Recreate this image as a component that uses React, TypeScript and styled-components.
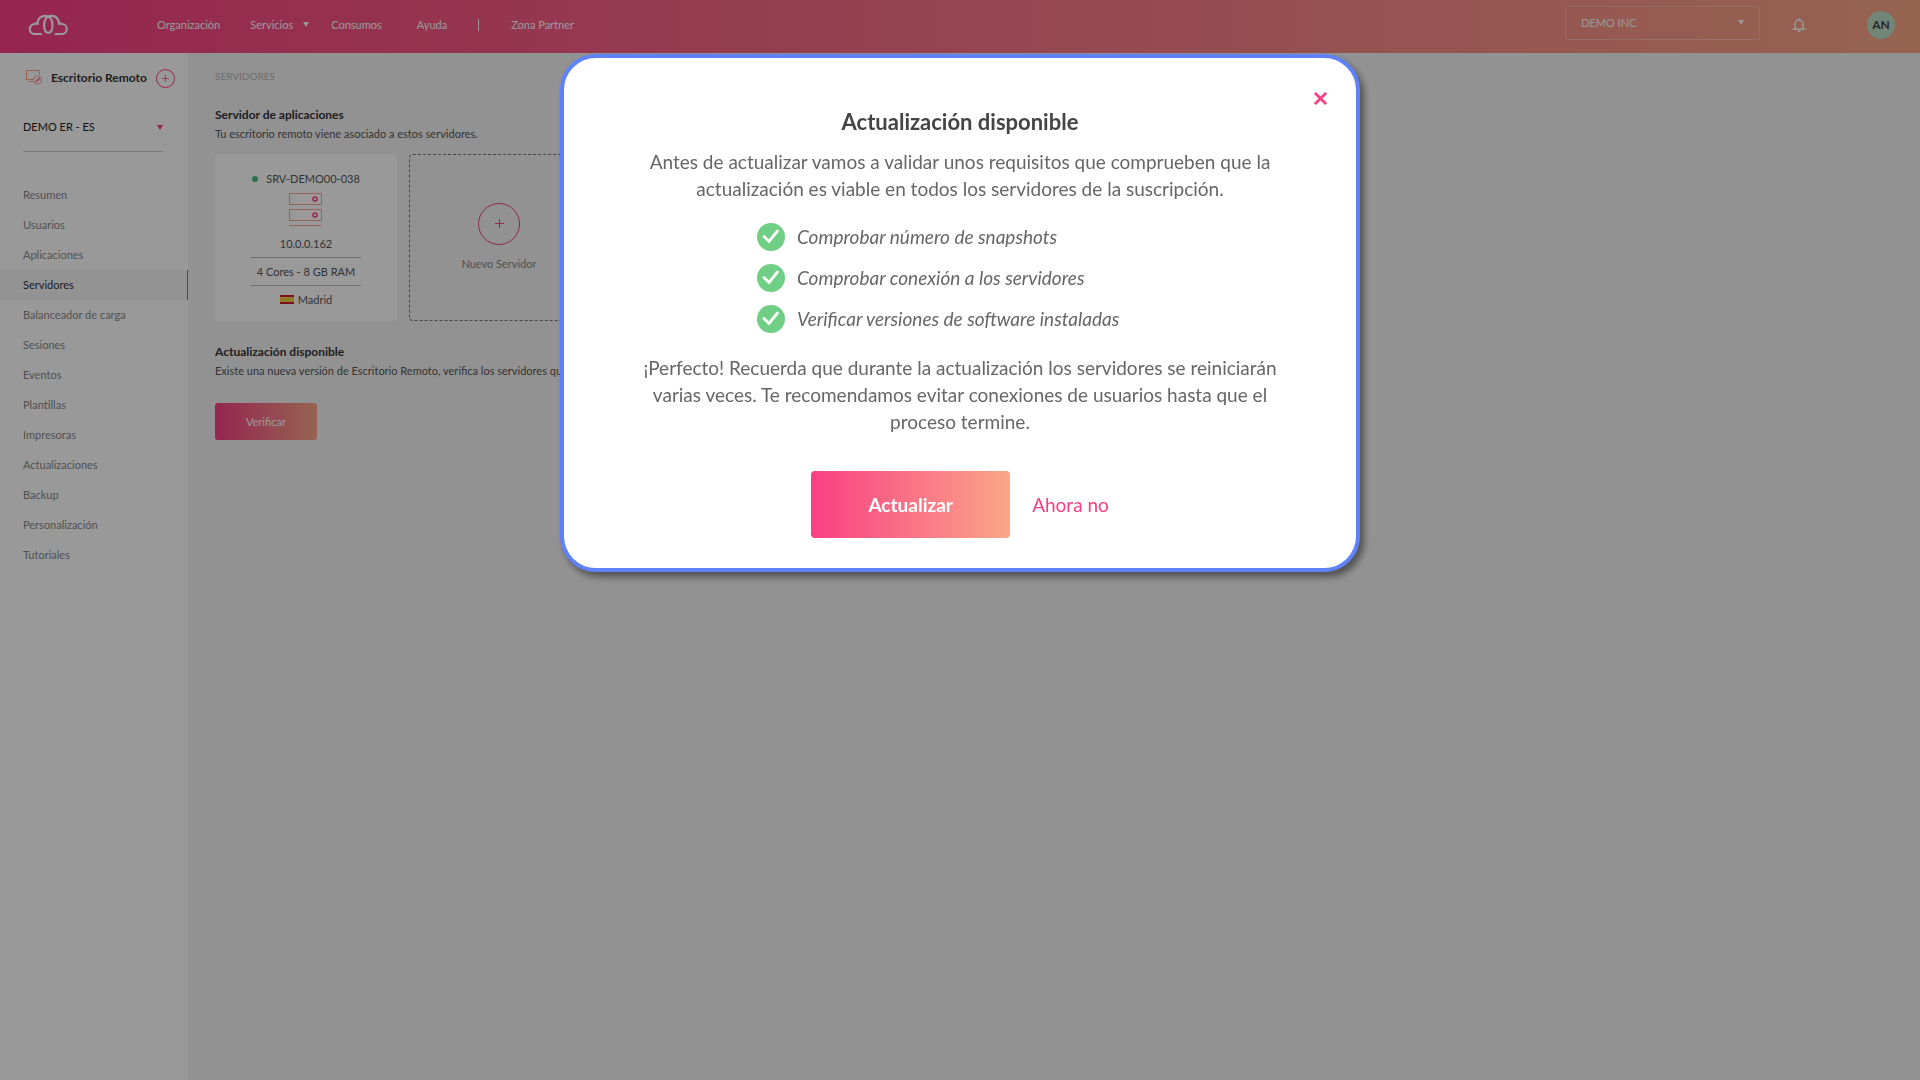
import React from 'react';
import styled, { createGlobalStyle } from 'styled-components';

const pink = '#f93f84';
const peach = '#faa688';
const brand = `linear-gradient(90deg, ${pink} 0%, ${peach} 100%)`;

const GlobalStyle = createGlobalStyle`
  * { box-sizing: border-box; }
  body { margin: 0; background: #f3f3f3; font-family: Lato, "Liberation Sans", sans-serif; font-size: 11px; line-height: 18px; color: #555; }
  button, select { font: inherit; color: inherit; background: none; border: 0; padding: 0; margin: 0; cursor: pointer; }
  a { color: inherit; text-decoration: none; }
  h1, h2, p, ul { margin: 0; padding: 0; list-style: none; }
  svg { flex-shrink: 0; }
`;

const Page = styled.div`
  min-height: 100vh;
  display: flex;
  flex-direction: column;
`;

const Header = styled.header`
  height: 53px;
  padding: 0 25px 4px 28px;
  display: flex;
  align-items: center;
  background: ${brand};
  color: #fff;
`;

const Logo = styled.a`
  display: flex;
  width: 129px;
`;

const TopNav = styled.nav`
  display: flex;
  flex: 1;
  align-items: center;
`;

const TopLink = styled.a<{ $gap: number }>`
  display: flex;
  align-items: center;
  gap: 10px;
  margin-right: ${(p) => p.$gap}px;
`;

const Triangle = styled.span<{ $color: string }>`
  border: 3px solid transparent;
  border-top: 5px solid ${(p) => p.$color};
  border-bottom: 0;
  pointer-events: none;
`;

const Divider = styled.span`
  width: 1px;
  height: 12px;
  margin-right: 32px;
  background: #fff;
`;

const CompanyBox = styled.div`
  width: 195px;
  height: 34px;
  margin-top: -4px;
  padding: 0 15px;
  display: flex;
  align-items: center;
  border: 1px solid rgba(255, 255, 255, 0.3);
  border-radius: 3px;
`;

const BareSelect = styled.select`
  flex: 1;
  appearance: none;
  outline: 0;
  option { color: #333; }
`;

const Bell = styled.button`
  margin: 0 61px 0 32px;
  display: flex;
`;

const Avatar = styled.button`
  width: 28px;
  height: 28px;
  border-radius: 50%;
  background: #bfe0c8;
  color: #444;
  font-size: 12px;
  font-weight: 700;
  line-height: 28px;
`;

const Body = styled.div`
  flex: 1;
  display: flex;
`;

const Sidebar = styled.aside`
  width: 188px;
  background: #fff;
`;

const Product = styled.div`
  height: 50px;
  padding: 0 13px 0 25px;
  display: flex;
  align-items: center;
  font-weight: 700;
  font-size: 12px;
  color: #333;
  white-space: nowrap;
`;

const ProductName = styled.span`
  flex: 1;
  margin-left: 8px;
`;

const RoundButton = styled.button<{ $size: number }>`
  width: ${(p) => p.$size}px;
  height: ${(p) => p.$size}px;
  display: flex;
  align-items: center;
  justify-content: center;
  border: 1px solid ${pink};
  border-radius: 50%;
`;

const Subscription = styled.div`
  height: 49px;
  margin: 0 25px 0 23px;
  display: flex;
  align-items: center;
  border-bottom: 1px solid #ccc;
  color: #222;
`;

const Menu = styled.ul`
  padding-top: 28px;
`;

const MenuLink = styled.a<{ $active?: boolean }>`
  height: 30px;
  padding-left: 23px;
  display: flex;
  align-items: center;
  border-right: 1px solid ${(p) => (p.$active ? pink : 'transparent')};
  background: ${(p) => (p.$active ? '#f6f6f6' : 'transparent')};
  color: ${(p) => (p.$active ? '#333' : '#888')};
`;

const Main = styled.main`
  flex: 1;
  padding: 15px 27px;
`;

const Crumb = styled.p`
  font-size: 10px;
  line-height: 16px;
  color: #b5b5b5;
  margin-bottom: 21px;
`;

const SectionTitle = styled.h2`
  font-size: 12px;
  line-height: 19px;
  font-weight: 700;
  color: #333;
`;

const SectionText = styled.p`
  line-height: 20px;
`;

const Cards = styled.div`
  display: flex;
  gap: 12px;
  margin: 10px 0 21px;
`;

const ServerCard = styled.article`
  width: 182px;
  height: 167px;
  padding: 16px 36px 0;
  display: flex;
  flex-direction: column;
  align-items: center;
  border-radius: 4px;
  background: #fff;
`;

const ServerName = styled.div`
  display: flex;
  align-items: center;
  gap: 8px;
  white-space: nowrap;
`;

const Dot = styled.span`
  width: 6px;
  height: 6px;
  border-radius: 50%;
  background: #43bd84;
`;

const ServerRow = styled.div<{ $line?: boolean }>`
  width: 100%;
  height: 28px;
  display: flex;
  align-items: center;
  justify-content: center;
  gap: 4px;
  border-bottom: 1px solid ${(p) => (p.$line ? '#bbb' : 'transparent')};
  white-space: nowrap;
`;

const Flag = styled.span`
  width: 14px;
  height: 9px;
  background: linear-gradient(#c8202a 25%, #f6cf45 25%, #f6cf45 75%, #c8202a 75%);
`;

const NewCard = styled.div`
  width: 180px;
  height: 167px;
  display: flex;
  flex-direction: column;
  align-items: center;
  justify-content: center;
  gap: 10px;
  border: 1px dashed #777;
  border-radius: 4px;
  color: #888;
`;

const VerifyButton = styled.button`
  width: 102px;
  height: 37px;
  margin-top: 22px;
  border-radius: 3px;
  background: ${brand};
  color: #fff;
`;

const Overlay = styled.div`
  position: fixed;
  inset: 0;
  padding-top: 54px;
  display: flex;
  align-items: flex-start;
  justify-content: center;
  background: rgba(0, 0, 0, 0.4);
`;

const Dialog = styled.section`
  position: relative;
  width: 800px;
  padding: 48px 60px 30px;
  display: flex;
  flex-direction: column;
  align-items: center;
  border: 4px solid #5f82fb;
  border-radius: 36px;
  background: #fff;
  box-shadow: 4px 5px 7px rgba(0, 0, 0, 0.45);
  font-size: 19px;
  line-height: 27px;
  text-align: center;
  color: #666;
`;

const CloseButton = styled.button`
  position: absolute;
  top: 34px;
  right: 29px;
  display: flex;
`;

const DialogTitle = styled.h1`
  font-size: 22px;
  line-height: 32px;
  font-weight: 700;
  color: #444;
  margin-bottom: 10px;
`;

const Checks = styled.ul`
  width: 406px;
  margin: 14px 0 15px;
  text-align: left;
`;

const Check = styled.li`
  height: 41px;
  display: flex;
  align-items: center;
  gap: 12px;
  font-style: italic;
  white-space: nowrap;
`;

const Actions = styled.div`
  margin-top: 36px;
  display: flex;
  align-items: center;
  gap: 22px;
`;

const UpdateButton = styled.button`
  width: 199px;
  height: 67px;
  border-radius: 4px;
  background: ${brand};
  color: #fff;
  font-weight: 700;
`;

const LaterButton = styled.button`
  color: ${pink};
`;

const Plus = ({ size }: { size: number }) => (
  <svg width={size} height={size} viewBox="0 0 9 9" fill="none" stroke={pink}>
    <path d="M4.5 0v9M0 4.5h9" />
  </svg>
);

const CheckIcon = () => (
  <svg width="28" height="28" viewBox="0 0 28 28" fill="none">
    <circle cx="14" cy="14" r="14" fill="#6fcf84" />
    <path d="M7 13.5l5 5L20.500 8" stroke="#fff" strokeWidth="2.8" strokeLinecap="round" />
  </svg>
);

const menu = ['Resumen', 'Usuarios', 'Aplicaciones', 'Servidores', 'Balanceador de carga', 'Sesiones', 'Eventos', 'Plantillas', 'Impresoras', 'Actualizaciones', 'Backup', 'Personalización', 'Tutoriales'];
const checks = ['Comprobar número de snapshots', 'Comprobar conexión a los servidores', 'Verificar versiones de software instaladas'];

export default function App() {
  return (
    <>
      <GlobalStyle />
      <Page>
        <Header>
          <Logo href="#" aria-label="Inicio">
            <svg width="40" height="22" viewBox="0 0 40 22" fill="none" stroke="#fff" strokeWidth="2.2" strokeLinecap="round">
              <path d="M13 20H7a5 5 0 0 1-.5-10C7.500 9.300 8.500 9.300 9.500 9.800 9.500 5 12.500 1.800 17 1.800c5 0 7.500 4 7.500 9 0 4.500-1.500 8-4.200 8s-4.200-3.500-4.200-8c0-5 2.500-9 7.500-9 4.500 0 7 3 7.400 8 1-.5 2-.5 3 .2a5 5 0 0 1-.5 10H27.500" />
            </svg>
          </Logo>
          <TopNav>
            <TopLink href="#" $gap={30}>Organización</TopLink>
            <TopLink href="#" $gap={22}>Servicios <Triangle $color="#fff" /></TopLink>
            <TopLink href="#" $gap={35}>Consumos</TopLink>
            <TopLink href="#" $gap={31}>Ayuda</TopLink>
            <Divider />
            <TopLink href="#" $gap={0}>Zona Partner</TopLink>
          </TopNav>
          <CompanyBox>
            <BareSelect aria-label="Empresa"><option>DEMO INC</option></BareSelect>
            <Triangle $color="#fff" />
          </CompanyBox>
          <Bell aria-label="Notificaciones">
            <svg width="14" height="14" viewBox="0 0 14 14" fill="none" stroke="#fff" strokeWidth="1.5">
              <path d="M.5 11.200h13M3 11V6a4 4 0 0 1 8 0v5M7 0v2M5.500 13.200h3" />
            </svg>
          </Bell>
          <Avatar aria-label="Cuenta">AN</Avatar>
        </Header>
        <Body>
          <Sidebar>
            <Product>
              <svg width="18" height="16" viewBox="0 0 18 16" fill="none" stroke={peach}>
                <path d="M8 9.500H1.500v-9h13V5M3.500 11.500h5" />
                <circle cx="12.500" cy="10" r="4" />
                <path d="M11 12l1-2.500 2.500-1.500-1 2.500z" stroke={pink} strokeWidth=".8" />
              </svg>
              <ProductName>Escritorio Remoto</ProductName>
              <RoundButton $size={19} aria-label="Añadir"><Plus size={7} /></RoundButton>
            </Product>
            <Subscription>
              <BareSelect aria-label="Suscripción"><option>DEMO ER - ES</option></BareSelect>
              <Triangle $color={pink} />
            </Subscription>
            <Menu>
              {menu.map((m) => (
                <li key={m}><MenuLink href="#" $active={m === 'Servidores'}>{m}</MenuLink></li>
              ))}
            </Menu>
          </Sidebar>
          <Main>
            <Crumb>SERVIDORES</Crumb>
            <SectionTitle>Servidor de aplicaciones</SectionTitle>
            <SectionText>Tu escritorio remoto viene asociado a estos servidores.</SectionText>
            <Cards>
              <ServerCard>
                <ServerName><Dot />SRV-DEMO00-038</ServerName>
                <svg width="34" height="42" viewBox="0 0 34 42" fill="none" stroke={peach}>
                  <path d="M.5 5.500h32v11H.5zM.5 21.500h32v11H.5zM0 37.500h33" />
                  <g stroke={pink} strokeWidth="1.500"><circle cx="26" cy="11" r="2" /><circle cx="26" cy="27" r="2" /></g>
                </svg>
                <ServerRow $line>10.0.0.162</ServerRow>
                <ServerRow $line>4 Cores - 8 GB RAM</ServerRow>
                <ServerRow><Flag />Madrid</ServerRow>
              </ServerCard>
              <NewCard>
                <RoundButton $size={42} aria-label="Nuevo Servidor"><Plus size={9} /></RoundButton>
                Nuevo Servidor
              </NewCard>
            </Cards>
            <SectionTitle>Actualización disponible</SectionTitle>
            <SectionText>Existe una nueva versión de Escritorio Remoto, verifica los servidores que se</SectionText>
            <VerifyButton>Verificar</VerifyButton>
          </Main>
        </Body>
      </Page>
      <Overlay>
        <Dialog role="dialog" aria-modal="true" aria-labelledby="dialog-title">
          <CloseButton aria-label="Cerrar">
            <svg width="13" height="13" viewBox="0 0 14 14" stroke={pink} strokeWidth="3"><path d="M1 1l12 12M13 1L1 13" /></svg>
          </CloseButton>
          <DialogTitle id="dialog-title">Actualización disponible</DialogTitle>
          <p>Antes de actualizar vamos a validar unos requisitos que comprueben que la actualización es viable en todos los servidores de la suscripción.</p>
          <Checks>
            {checks.map((c) => <Check key={c}><CheckIcon />{c}</Check>)}
          </Checks>
          <p>¡Perfecto! Recuerda que durante la actualización los servidores se reiniciarán varias veces. Te recomendamos evitar conexiones de usuarios hasta que el proceso termine.</p>
          <Actions>
            <UpdateButton>Actualizar</UpdateButton>
            <LaterButton>Ahora no</LaterButton>
          </Actions>
        </Dialog>
      </Overlay>
    </>
  );
}
